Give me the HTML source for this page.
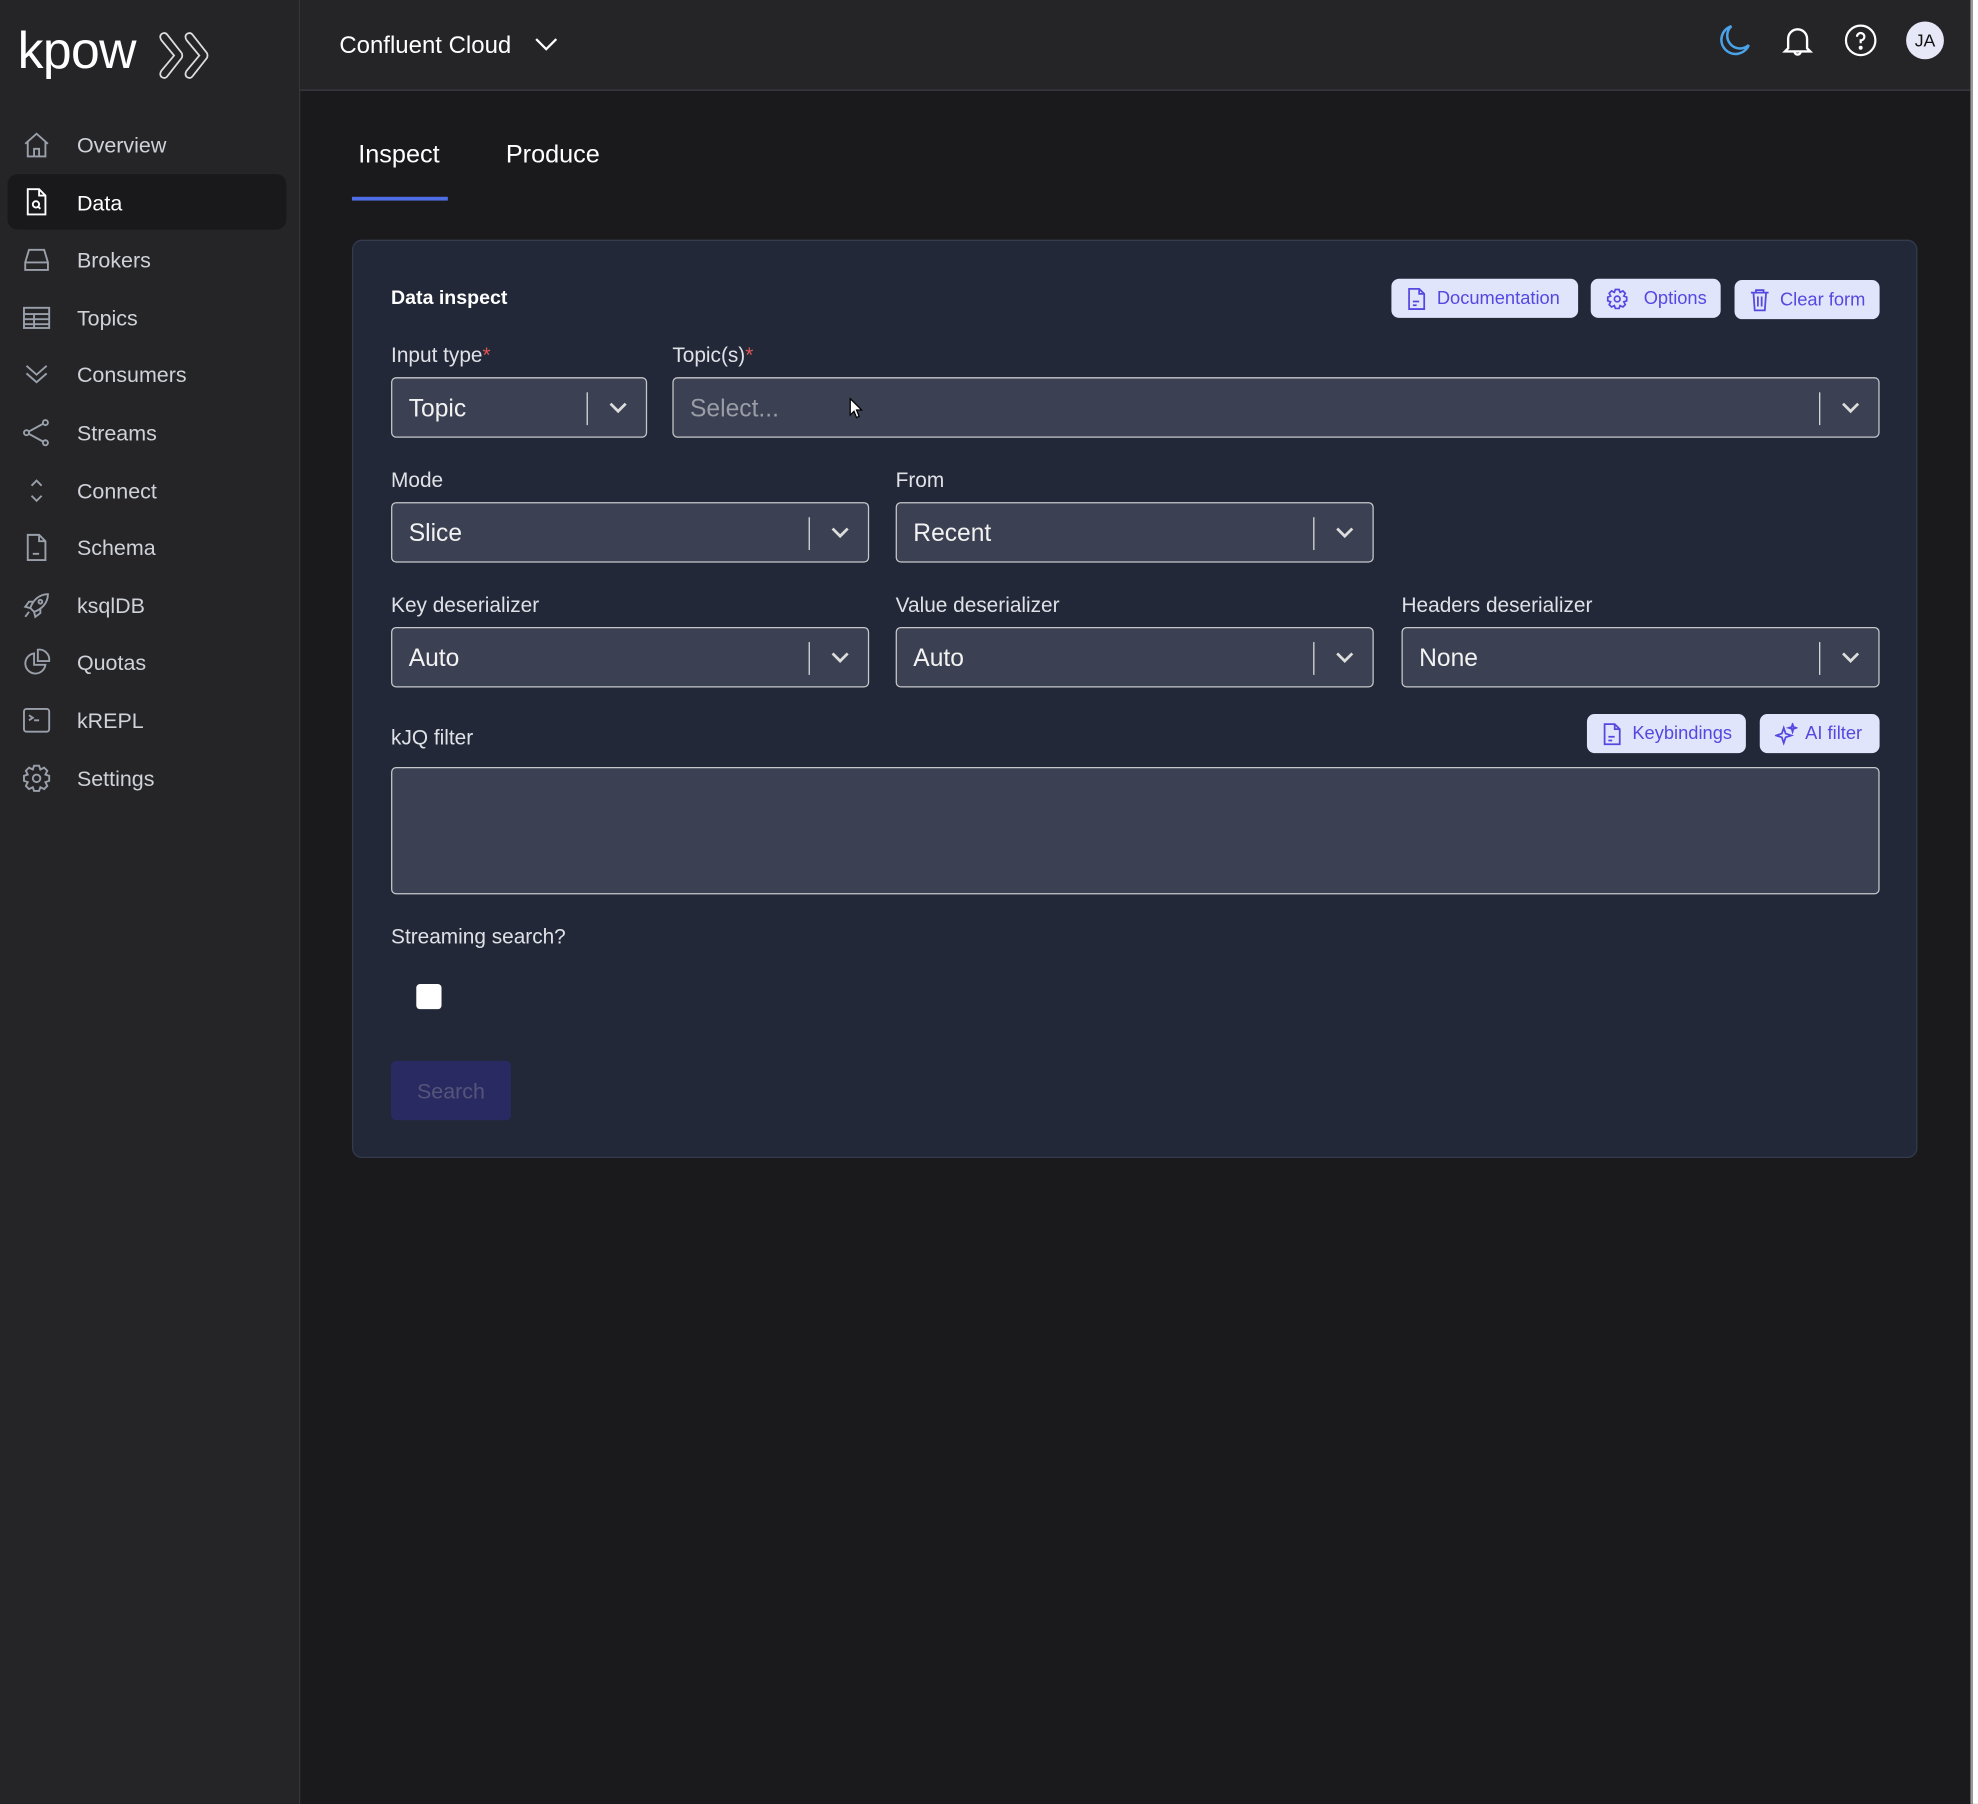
<!DOCTYPE html>
<html><head><meta charset="utf-8"><style>
html,body{margin:0;padding:0;width:1978px;height:1804px;overflow:hidden;background:#1a1a1c}
#w{position:absolute;left:0;top:0;width:1568px;height:1430px;transform:scale(1.26148);transform-origin:0 0;font-family:"Liberation Sans",sans-serif;color:#e6e6e6;background:#1a1a1c}
.a{position:absolute}
.side{left:0;top:0;width:238px;height:1430px;background:#252527;border-right:1px solid #35353a;box-sizing:border-box}
.top{left:238px;top:0;width:1324px;height:72px;background:#252527;border-bottom:1px solid #3a3a44;box-sizing:border-box}
.nav{position:absolute;left:61px;font-size:17px;color:#cfd2d8;transform:translateY(-50%);margin-top:1px}
.ic{position:absolute;left:17px;width:24px;height:24px;transform:translateY(-50%)}
.card{left:279px;top:190px;width:1241px;height:728px;background:#222838;border:1px solid #333b4c;border-radius:8px;box-sizing:border-box}
.lbl{position:absolute;font-size:16.5px;color:#dfe1e6;margin-top:1px}
.lbl i{color:#e05555;font-style:normal}
.sel{position:absolute;height:48px;background:#3b4152;border:1px solid #c8c8cc;border-radius:4px;box-sizing:border-box;font-size:19.5px;color:#f2f2f2;line-height:48px;padding-left:13px}
.sel .bar{position:absolute;right:46px;top:11px;width:1px;height:26px;background:#ddd}
.sel svg{position:absolute;right:14px;top:16px}
.btn{position:absolute;height:31px;background:#e0e5fb;border-radius:6px;color:#5548e0;font-size:14.5px;line-height:32px;box-sizing:border-box;padding-left:36px}
.btn svg{position:absolute;left:12px;top:7px}
</style></head><body><div id="w">
<div class="a side"></div>
<div class="a top"></div>
<div class="a" style="left:1562px;top:0;width:2px;height:1430px;background:#9a9a9a"></div>
<div class="a" style="left:1564px;top:0;width:4px;height:1430px;background:#fff"></div>
<!-- logo -->
<div class="a" style="left:14px;top:17px;font-size:41px;color:#fff;letter-spacing:-0.5px">kpow</div>
<svg class="a" style="left:125px;top:24px" width="42" height="40" viewBox="0 0 42 40" fill="none" stroke="#ddd" stroke-width="1.4"><path d="M3 3 Q1 5 3 8 L13 20 L3 32 Q1 35 3 37 Q6 39 8 36 L19 22 Q20 20 19 18 L8 4 Q6 1 3 3 Z"/><path d="M23 3 Q21 5 23 8 L33 20 L23 32 Q21 35 23 37 Q26 39 28 36 L39 22 Q40 20 39 18 L28 4 Q26 1 23 3 Z"/></svg>
<!-- nav -->
<div class="a" style="left:6px;top:138px;width:221px;height:44px;background:#19191b;border-radius:8px"></div>
<svg class="ic" style="top:115px" viewBox="0 0 24 24" fill="none" stroke="#9aa0ab" stroke-width="1.5"><path d="M3 11 L12 3 L21 11 M5 9 V21 H19 V9 M10 21 V15 H14 V21"/></svg>
<div class="nav" style="top:115px">Overview</div>
<svg class="ic" style="top:160px" viewBox="0 0 24 24" fill="none" stroke="#fff" stroke-width="1.5"><path d="M5 2 H14 L19 7 V22 H5 Z M14 2 V7 H19"/><circle cx="11.5" cy="14" r="2.5"/><path d="M13.5 16 L15 17.5"/></svg>
<div class="nav" style="top:161px;color:#fff">Data</div>
<svg class="ic" style="top:206px" viewBox="0 0 24 24" fill="none" stroke="#9aa0ab" stroke-width="1.5"><path d="M3 14 L6 4 H18 L21 14 V20 H3 Z M3 14 H21"/></svg>
<div class="nav" style="top:206px">Brokers</div>
<svg class="ic" style="top:252px" viewBox="0 0 24 24" fill="none" stroke="#9aa0ab" stroke-width="1.5"><rect x="2" y="4" width="20" height="16"/><path d="M2 9 H22 M2 13 H22 M2 17 H22 M10 9 V20"/></svg>
<div class="nav" style="top:252px">Topics</div>
<svg class="ic" style="top:297px" viewBox="0 0 24 24" fill="none" stroke="#9aa0ab" stroke-width="1.5"><path d="M4 5 L12 12 L20 5 M4 11 L12 18 L20 11"/></svg>
<div class="nav" style="top:297px">Consumers</div>
<svg class="ic" style="top:343px" viewBox="0 0 24 24" fill="none" stroke="#9aa0ab" stroke-width="1.5"><circle cx="19" cy="4" r="2"/><circle cx="19" cy="20" r="2"/><circle cx="4" cy="12" r="2"/><path d="M6 11 L17 5 M6 13 L17 19"/></svg>
<div class="nav" style="top:343px">Streams</div>
<svg class="ic" style="top:389px" viewBox="0 0 24 24" fill="none" stroke="#9aa0ab" stroke-width="1.5"><path d="M8 8 L12 4 L16 8 M8 16 L12 20 L16 16"/></svg>
<div class="nav" style="top:389px">Connect</div>
<svg class="ic" style="top:434px" viewBox="0 0 24 24" fill="none" stroke="#9aa0ab" stroke-width="1.5"><path d="M5 2 H14 L19 7 V22 H5 Z M14 2 V7 H19 M9 17 H14"/></svg>
<div class="nav" style="top:434px">Schema</div>
<svg class="ic" style="top:480px" viewBox="0 0 24 24" fill="none" stroke="#9aa0ab" stroke-width="1.5"><path d="M21 3 C14 3 9 8 7 14 L10 17 C16 15 21 10 21 3 Z M7 14 L3 13 L6 9 H10 M10 17 L11 21 L15 18 V14 M6 17 L3 21"/><circle cx="15" cy="9" r="1.5"/></svg>
<div class="nav" style="top:480px">ksqlDB</div>
<svg class="ic" style="top:525px" viewBox="0 0 24 24" fill="none" stroke="#9aa0ab" stroke-width="1.5"><path d="M10 5 A8 8 0 1 0 19 14 H10 Z M13 2 A8 8 0 0 1 22 11 H13 Z"/></svg>
<div class="nav" style="top:525px">Quotas</div>
<svg class="ic" style="top:571px" viewBox="0 0 24 24" fill="none" stroke="#9aa0ab" stroke-width="1.5"><rect x="2" y="3" width="20" height="18" rx="2"/><path d="M6 8 L9 10 L6 12 M10 12 H14"/></svg>
<div class="nav" style="top:571px">kREPL</div>
<svg class="ic" style="top:617px" viewBox="0 0 24 24" fill="none" stroke="#9aa0ab" stroke-width="1.5"><circle cx="12" cy="12" r="3"/><path d="M10 2 H14 L15 5 L18 3.5 L20.5 6 L19 9 L22 10 V14 L19 15 L20.5 18 L18 20.5 L15 19 L14 22 H10 L9 19 L6 20.5 L3.5 18 L5 15 L2 14 V10 L5 9 L3.5 6 L6 3.5 L9 5 Z"/></svg>
<div class="nav" style="top:617px">Settings</div>
<!-- header -->
<div class="a" style="left:269px;top:26px;font-size:19px;color:#fff">Confluent Cloud</div>
<svg class="a" style="left:423px;top:28px" width="20" height="14" viewBox="0 0 20 14" fill="none" stroke="#fff" stroke-width="1.8"><path d="M2 3 L10 11 L18 3"/></svg>
<svg class="a" style="left:1360px;top:17px" width="30" height="30" viewBox="0 0 24 24" fill="none" stroke="#4aa3e8" stroke-width="1.6"><path d="M10 3 A9 9 0 1 0 21 15 A7 7 0 0 1 10 3 Z"/></svg>
<svg class="a" style="left:1410px;top:17px" width="30" height="30" viewBox="0 0 24 24" fill="none" stroke="#fff" stroke-width="1.5"><path d="M6 17 V11 A6 6 0 0 1 18 11 V17 L20 19 H4 Z M10 19 A2 2 0 0 0 14 19"/></svg>
<svg class="a" style="left:1461px;top:18px" width="28" height="28" viewBox="0 0 24 24" fill="none" stroke="#fff" stroke-width="1.5"><circle cx="12" cy="12" r="10"/><path d="M9.5 9.5 A2.5 2.5 0 1 1 12 12 V14"/><circle cx="12" cy="17" r=".6" fill="#fff"/></svg>
<div class="a" style="left:1511px;top:17px;width:30px;height:30px;border-radius:50%;background:#e6e8f8;color:#111;font-size:14px;text-align:center;line-height:30px">JA</div>
<!-- tabs -->
<div class="a" style="left:284px;top:112px;font-size:20px;color:#fff">Inspect</div>
<div class="a" style="left:401px;top:112px;font-size:20px;color:#fff">Produce</div>
<div class="a" style="left:279px;top:156px;width:76px;height:3px;background:#4f6ee6"></div>
<!-- card -->
<div class="a card"></div>
<div class="a" style="left:310px;top:228px;font-size:15.5px;font-weight:bold;color:#fff">Data inspect</div>
<div class="btn" style="left:1103px;top:221px;width:148px">
<svg width="16" height="18" viewBox="0 0 16 18" fill="none" stroke="#5548e0" stroke-width="1.4"><path d="M2 1 H10 L14 5 V17 H2 Z M10 1 V5 H14 M5 11 H10 M5 14 H8"/></svg>Documentation</div>
<div class="btn" style="left:1261px;top:221px;width:103px;padding-left:42px">
<svg width="18" height="18" viewBox="0 0 24 24" fill="none" stroke="#5548e0" stroke-width="1.8"><circle cx="12" cy="12" r="3"/><path d="M10 2 H14 L15 5 L18 3.5 L20.5 6 L19 9 L22 10 V14 L19 15 L20.5 18 L18 20.5 L15 19 L14 22 H10 L9 19 L6 20.5 L3.5 18 L5 15 L2 14 V10 L5 9 L3.5 6 L6 3.5 L9 5 Z"/></svg>Options</div>
<div class="btn" style="left:1375px;top:222px;width:115px">
<svg width="16" height="18" viewBox="0 0 16 18" fill="none" stroke="#5548e0" stroke-width="1.4"><path d="M1 3 H15 M5 3 V1 H11 V3 M3 3 L4 17 H12 L13 3 M6.5 6 V14 M9.5 6 V14"/></svg>Clear form</div>
<div class="lbl" style="left:310px;top:272px">Input type<i>*</i></div>
<div class="lbl" style="left:533px;top:272px">Topic(s)<i>*</i></div>
<div class="sel" style="left:310px;top:299px;width:203px">Topic<div class="bar"></div><svg width="16" height="14" viewBox="0 0 16 14" fill="none" stroke="#ddd" stroke-width="2.2"><path d="M2 4 L8 10 L14 4"/></svg></div>
<div class="sel" style="left:533px;top:299px;width:957px;color:#9a9ca6">Select...<div class="bar"></div><svg width="16" height="14" viewBox="0 0 16 14" fill="none" stroke="#ddd" stroke-width="2.2"><path d="M2 4 L8 10 L14 4"/></svg></div>
<svg class="a" style="left:673px;top:315px" width="12" height="18" viewBox="0 0 12 18"><path d="M1 1 V14 L4 11 L6 16 L8 15 L6 10 L10 10 Z" fill="#fff" stroke="#000" stroke-width="1"/></svg>
<div class="lbl" style="left:310px;top:371px">Mode</div>
<div class="lbl" style="left:710px;top:371px">From</div>
<div class="sel" style="left:310px;top:398px;width:379px">Slice<div class="bar"></div><svg width="16" height="14" viewBox="0 0 16 14" fill="none" stroke="#ddd" stroke-width="2.2"><path d="M2 4 L8 10 L14 4"/></svg></div>
<div class="sel" style="left:710px;top:398px;width:379px">Recent<div class="bar"></div><svg width="16" height="14" viewBox="0 0 16 14" fill="none" stroke="#ddd" stroke-width="2.2"><path d="M2 4 L8 10 L14 4"/></svg></div>
<div class="lbl" style="left:310px;top:470px">Key deserializer</div>
<div class="lbl" style="left:710px;top:470px">Value deserializer</div>
<div class="lbl" style="left:1111px;top:470px">Headers deserializer</div>
<div class="sel" style="left:310px;top:497px;width:379px">Auto<div class="bar"></div><svg width="16" height="14" viewBox="0 0 16 14" fill="none" stroke="#ddd" stroke-width="2.2"><path d="M2 4 L8 10 L14 4"/></svg></div>
<div class="sel" style="left:710px;top:497px;width:379px">Auto<div class="bar"></div><svg width="16" height="14" viewBox="0 0 16 14" fill="none" stroke="#ddd" stroke-width="2.2"><path d="M2 4 L8 10 L14 4"/></svg></div>
<div class="sel" style="left:1111px;top:497px;width:379px">None<div class="bar"></div><svg width="16" height="14" viewBox="0 0 16 14" fill="none" stroke="#ddd" stroke-width="2.2"><path d="M2 4 L8 10 L14 4"/></svg></div>
<div class="lbl" style="left:310px;top:575px">kJQ filter</div>
<div class="btn" style="left:1258px;top:566px;width:126px">
<svg width="16" height="18" viewBox="0 0 16 18" fill="none" stroke="#5548e0" stroke-width="1.4"><path d="M2 1 H10 L14 5 V17 H2 Z M10 1 V5 H14 M5 11 H10 M5 14 H8"/></svg>Keybindings</div>
<div class="btn" style="left:1395px;top:566px;width:95px">
<svg width="18" height="18" viewBox="0 0 18 18" fill="none" stroke="#5548e0" stroke-width="1.4"><path d="M7 4 L8.5 8.5 L13 10 L8.5 11.5 L7 16 L5.5 11.5 L1 10 L5.5 8.5 Z M14 1 L14.7 3.3 L17 4 L14.7 4.7 L14 7 L13.3 4.7 L11 4 L13.3 3.3 Z"/></svg>AI filter</div>
<div class="a" style="left:310px;top:608px;width:1180px;height:101px;background:#3b4152;border:1px solid #c8c8cc;border-radius:4px;box-sizing:border-box"></div>
<div class="lbl" style="left:310px;top:733px">Streaming search?</div>
<div class="a" style="left:330px;top:780px;width:20px;height:20px;background:#fff;border-radius:3px"></div>
<div class="a" style="left:310px;top:841px;width:95px;height:47px;background:#2a2a62;border-radius:4px;color:#55557a;font-size:17px;text-align:center;line-height:49px">Search</div>
</div></body></html>
